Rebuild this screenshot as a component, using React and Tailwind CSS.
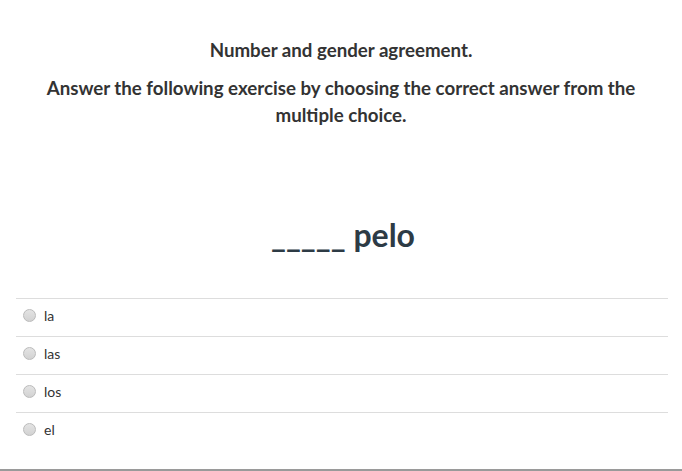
export default function App() {
  const options = ["la", "las", "los", "el"];

  return (
    <div
      className="w-[682px] h-[471px] bg-white text-[#333] flex flex-col overflow-hidden"
      style={{ fontFamily: "Lato, 'Open Sans', sans-serif" }}
    >
      <div className="flex-1 flex flex-col">
        {/* Header */}
        <div className="pt-[36px] px-4 text-center font-bold text-[18.7px] leading-[27px]">
          <p className="mt-[1px]">Number and gender agreement.</p>
          <p className="mt-[11px] px-6">
            Answer the following exercise by choosing the correct answer from the multiple choice.
          </p>
        </div>

        {/* Question */}
        <div className="mt-[88px] pl-[4px] text-center font-bold text-[32px] leading-[36px] text-[#2d3b45]">
          _____ pelo
        </div>

        {/* Choices */}
        <div className="mt-[45px] mx-4 w-[652px]">
          {options.map(o => (
            <label
              key={o}
              className="flex items-center h-[38px] pb-[5px] border-t border-[#ddd] pl-[7px] text-[14px] text-[#333]"
            >
              <span className="w-[13px] h-[13px] rounded-full border border-[#bbb] bg-gradient-to-b from-[#e4e4e4] to-[#d2d2d2]" />
              <span className="ml-[8px]">{o}</span>
            </label>
          ))}
        </div>
      </div>
      <div className="h-[2px] bg-[#9a9a9a]" />
    </div>
  );
}
